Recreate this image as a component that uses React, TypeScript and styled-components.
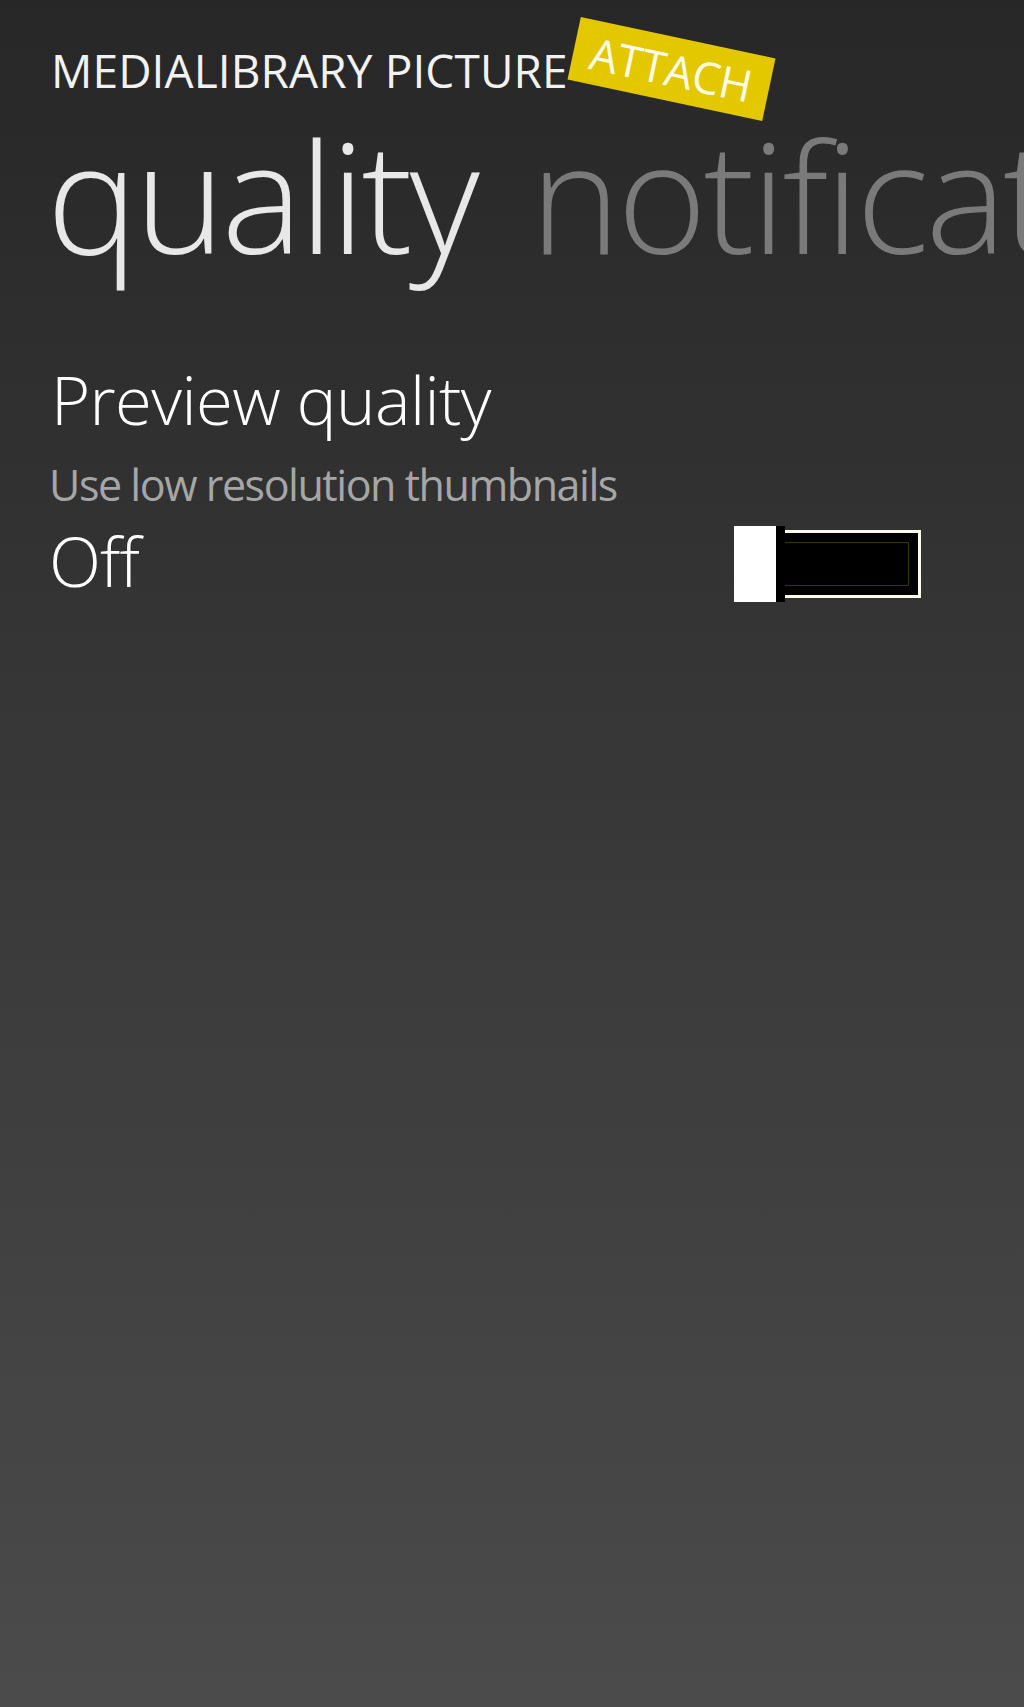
import React from 'react';
import styled, { createGlobalStyle } from 'styled-components';

const GlobalStyle = createGlobalStyle`
  html, body {
    margin: 0;
    padding: 0;
    height: 100%;
  }

  body {
    font-family: 'Open Sans', 'Noto Sans', 'Liberation Sans', sans-serif;
    background: #272727;
  }

  #root {
    min-height: 100%;
  }
`;

const Page = styled.div`
  min-height: 100vh;
  box-sizing: border-box;
  padding: 47px 0 0 49px;
  overflow: hidden;
  background: linear-gradient(180deg, #272727 0%, #4b4b4b 100%);
  color: #ffffff;
`;

const Header = styled.div`
  display: flex;
  align-items: flex-start;
  height: 46px;
  padding-left: 2px;
`;

const AppTitle = styled.div`
  font-size: 46px;
  line-height: 1;
  font-weight: 400;
  letter-spacing: 0.1px;
  color: #f2f2f2;
  white-space: nowrap;
`;

const Sticker = styled.div`
  flex: none;
  width: 199px;
  height: 64px;
  margin: -10px 0 0 4px;
  display: flex;
  align-items: center;
  justify-content: center;
  background: #e3c800;
  color: #fffbe6;
  font-size: 44px;
  line-height: 1;
  transform: rotate(12deg);
`;

const Pivot = styled.div`
  display: flex;
  gap: 54px;
  margin: 25px 0 0 -2px;
  white-space: nowrap;
`;

const PivotItem = styled.div<{ $active?: boolean }>`
  font-size: 153px;
  line-height: 1;
  font-weight: 300;
  letter-spacing: -3.4px;
  color: ${({ $active }) => ($active ? '#e8e8e8' : '#7a7a7a')};
`;

const Setting = styled.section`
  display: flex;
  flex-direction: column;
  padding-right: 103px;
`;

const SettingTitle = styled.h2`
  margin: 95px 0 0 2px;
  font-size: 67px;
  line-height: 1;
  font-weight: 300;
  letter-spacing: -0.6px;
  color: #ffffff;
`;

const SettingHint = styled.div`
  margin-top: 30px;
  font-size: 43px;
  line-height: 1;
  font-weight: 400;
  letter-spacing: -1.45px;
  color: #a6a6a6;
`;

const ToggleRow = styled.div`
  display: flex;
  align-items: flex-start;
  justify-content: space-between;
  margin-top: 21px;
`;

const StateLabel = styled.div`
  font-size: 68px;
  line-height: 1;
  font-weight: 300;
  letter-spacing: -1px;
  color: #ffffff;
`;

const Switch = styled.div`
  display: flex;
  align-items: center;
  margin-top: -1px;
`;

const Thumb = styled.div`
  width: 42px;
  height: 76px;
  background: #ffffff;
  border-right: 9px solid #000000;
`;

const Track = styled.div`
  box-sizing: border-box;
  width: 136px;
  height: 68px;
  padding: 9px 9px 9px 0;
  border: 3px solid #fffbea;
  border-left: none;
  background: #000000;
  display: flex;
`;

const TrackFill = styled.div`
  flex: 1;
  border: 1px solid #3d3600;
  border-left: none;
`;

export default function App() {
  return (
    <>
      <GlobalStyle />
      <Page>
        <Header>
          <AppTitle>MEDIALIBRARY PICTURE</AppTitle>
          <Sticker>ATTACH</Sticker>
        </Header>
        <Pivot>
          <PivotItem $active>quality</PivotItem>
          <PivotItem>notifications</PivotItem>
        </Pivot>
        <Setting>
          <SettingTitle>Preview quality</SettingTitle>
          <SettingHint>Use low resolution thumbnails</SettingHint>
          <ToggleRow>
            <StateLabel>Off</StateLabel>
            <Switch>
              <Thumb />
              <Track>
                <TrackFill />
              </Track>
            </Switch>
          </ToggleRow>
        </Setting>
      </Page>
    </>
  );
}
